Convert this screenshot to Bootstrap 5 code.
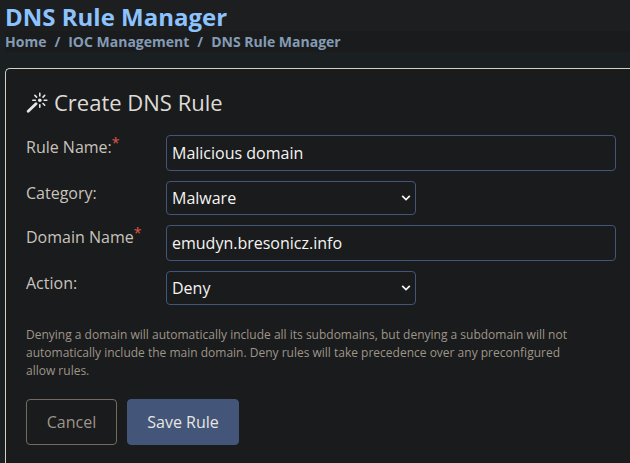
<!DOCTYPE html>
<html lang="en">
<head>
<meta charset="utf-8">
<meta name="viewport" content="width=device-width, initial-scale=1">
<title>DNS Rule Manager</title>
<link href="https://cdn.jsdelivr.net/npm/bootstrap@5.3.0/dist/css/bootstrap.min.css" rel="stylesheet">
<style>
body { background: #1a1f22; color: #c8c3bc; font-family: "Open Sans", "Noto Sans", sans-serif; font-size: 16px; height: 463px; }
.page-head { background: #1c1e1f; height: 31px; padding-left: 5px; }
.page-head h1 { font-size: 24px; line-height: 33px; color: #8cc3ff; }
.crumb-bar { background: #1a1b1c; height: 21px; margin-left: 5px; font-size: 14px; line-height: 21px; }
.crumb-bar .breadcrumb { --bs-breadcrumb-divider-color: #849bb5; --bs-breadcrumb-item-padding-x: 8px; --bs-breadcrumb-item-active-color: #849bb5; }
.crumb-bar a { color: #849bb5; }
.crumb-bar .breadcrumb-item, .crumb-bar .breadcrumb-item + .breadcrumb-item::before { color: #849bb5; }
.rule-card { margin: 16px 0 0 5px; height: 395px; background: #1a1b1c; border: 1px solid #d3cfc3; border-width: 1px 0 0 1px; border-radius: 5px 0 0 0; color: inherit; padding: 19px 0 0 20px; }
.rule-card h2 { font-size: 22px; line-height: 28px; color: #dedbd7; gap: 6px; }
.rule-form { display: grid; grid-template-columns: 140px 450px; row-gap: 10px; margin-top: 19px; }
.rule-form label { line-height: 24px; }
.rule-form .form-control, .rule-form .form-select { background-color: #1a1b1c; border: 1px solid #435578; border-radius: 4px; color: #f5f4f2; font-size: 16px; line-height: 24px; padding: 5px; }
.rule-form .form-control { height: 36px; }
.rule-form .form-select { width: 250px; height: 34px; padding: 4px 24px 4px 5px; background-image: url("data:image/svg+xml,%3csvg xmlns='http://www.w3.org/2000/svg' viewBox='0 0 10 8'%3e%3cpath fill='none' stroke='%23f5f4f2' stroke-width='1.7' d='M1.2 1.8 5 5.6l3.8-3.8'/%3e%3c/svg%3e"); background-size: 10px 8px; background-position: right 4px center; }
.req { color: #e0554d; font-size: 14px; line-height: 0; vertical-align: 5px; }
.rule-note { width: 560px; margin-top: 21px; font-size: 12px; line-height: 18px; color: #9e958a; }
.rule-actions { margin-top: 19px; gap: 10px; }
.rule-actions .btn { height: 46px; padding: 10px 0; line-height: 24px; border-radius: 4px; font-size: 16px; white-space: nowrap; }
.btn-cancel { width: 91px; border: 1px solid #736b5e; color: #9e958a; }
.btn-save { width: 112px; background: #435578; border: 1px solid #435578; color: #e8e6e3; }
</style>
</head>
<body class="overflow-hidden">
<header class="page-head"><h1 class="fw-bold mb-0">DNS Rule Manager</h1></header>
<nav class="crumb-bar" aria-label="breadcrumb">
  <ol class="breadcrumb fw-bold mb-0">
    <li class="breadcrumb-item"><a class="text-decoration-none" href="#">Home</a></li>
    <li class="breadcrumb-item"><a class="text-decoration-none" href="#">IOC Management</a></li>
    <li class="breadcrumb-item active" aria-current="page">DNS Rule Manager</li>
  </ol>
</nav>
<main class="card rule-card">
  <h2 class="d-flex align-items-center fw-normal mb-0">
    <svg width="22" height="22" viewBox="0 0 22 22" fill="none" stroke="#e8e6e3" stroke-linecap="round" aria-hidden="true">
      <path stroke-width="2.8" d="M2.2 20.3 10 12.8"/>
      <circle cx="13.8" cy="9.3" r="1.8" fill="#e8e6e3" stroke="none"/>
      <path stroke-width="1.6" d="M13.8 2.3v2.6M13.8 13.7v2.6M6.8 9.3h2.6M18.2 9.3h2.6M8.9 4.4l1.7 1.7M18.7 4.4l-1.7 1.7M18.7 14.2l-1.7-1.7"/>
    </svg>
    <span>Create DNS Rule</span>
  </h2>
  <form>
    <div class="rule-form">
      <label for="ruleName">Rule Name:<span class="req">*</span></label>
      <input id="ruleName" class="form-control" type="text" value="Malicious domain">
      <label for="category">Category:</label>
      <select id="category" class="form-select"><option>Malware</option></select>
      <label for="domainName">Domain Name<span class="req">*</span></label>
      <input id="domainName" class="form-control" type="text" value="emudyn.bresonicz.info">
      <label for="action">Action:</label>
      <select id="action" class="form-select"><option>Deny</option><option>Allow</option></select>
    </div>
    <p class="rule-note mb-0">Denying a domain will automatically include all its subdomains, but denying a subdomain will not automatically include the main domain. Deny rules will take precedence over any preconfigured allow rules.</p>
    <div class="rule-actions d-flex">
      <button type="button" class="btn btn-cancel">Cancel</button>
      <button type="button" class="btn btn-save">Save Rule</button>
    </div>
  </form>
</main>
<script src="https://cdn.jsdelivr.net/npm/bootstrap@5.3.0/dist/js/bootstrap.bundle.min.js"></script>
</body>
</html>
